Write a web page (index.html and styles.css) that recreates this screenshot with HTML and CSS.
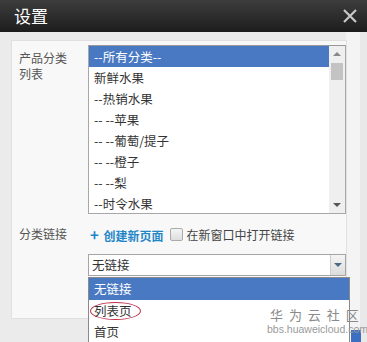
FILE: index.html
```html
<!DOCTYPE html>
<html lang="zh-CN">
<head>
    <meta charset="UTF-8">
    <title>设置</title>
    <link rel="stylesheet" href="styles.css">
</head>
<body>
    <div class="dialog">
        <div class="titlebar">
            <span class="title">设置</span>
            <svg class="close" width="16" height="16" viewBox="0 0 16 16">
                <path d="M2 2 L14 14 M14 2 L2 14" stroke="#c8c8c8" stroke-width="2.2" fill="none"/>
            </svg>
        </div>
        <div class="body">
            <div class="panel">
                <div class="row">
                    <div class="label">产品分类<br>列表</div>
                    <div class="listbox">
                        <ul class="items">
                            <li class="selected">--所有分类--</li>
                            <li>新鲜水果</li>
                            <li>--热销水果</li>
                            <li>-- --苹果</li>
                            <li>-- --葡萄/提子</li>
                            <li>-- --橙子</li>
                            <li>-- --梨</li>
                            <li>--时令水果</li>
                        </ul>
                        <div class="scrollbar">
                            <span class="arrow up"></span>
                            <span class="thumb"></span>
                            <span class="track"></span>
                            <span class="arrow down"></span>
                        </div>
                    </div>
                </div>
                <div class="row link-row">
                    <div class="label">分类链接</div>
                    <div class="link-tools">
                        <a class="create"><span class="plus">+</span> 创建新页面</a>
                        <span class="checkbox"></span>
                        <span class="check-text">在新窗口中打开链接</span>
                    </div>
                </div>
                <div class="row">
                    <div class="label"></div>
                    <div class="select">
                        <div class="select-box">
                            <span class="value">无链接</span>
                            <span class="select-btn"><span class="arrow down"></span></span>
                        </div>
                        <ul class="dropdown">
                            <li class="selected">无链接</li>
                            <li><span class="circled">列表页</span></li>
                            <li>首页</li>
                        </ul>
                    </div>
                </div>
            </div>
        </div>
        <div class="footer-btn"></div>
        <div class="watermark">
            <div class="wm-name">华 为 云 社 区</div>
            <div class="wm-url">bbs.huaweicloud.com</div>
        </div>
    </div>
</body>
</html>
```

FILE: styles.css
```css
body {
    margin: 0;
    font-family: "Noto Sans CJK SC", "Liberation Sans", sans-serif;
    font-size: 12px;
    color: #333;
    background-color: #ebebeb;
    overflow: hidden;
}
.dialog {
    position: relative;
    width: 367px;
    height: 342px;
    overflow: hidden;
}
.titlebar {
    height: 32px;
    display: flex;
    align-items: center;
    justify-content: space-between;
    padding: 0 9px 0 14px;
    background: linear-gradient(#3d3d3d, #1d1d1d);
}
.title {
    color: #fff;
    font-size: 17px;
    line-height: 1;
    margin-top: -2px;
}
.close {
    margin-top: -1px;
}
.body {
    padding: 8px 0 0 11px;
    background: linear-gradient(to right, #ebebeb 346px, #f4f4f4 346px, #f4f4f4 360px, #e9e9e9 360px);
    height: 302px;
}
.panel {
    width: 327px;
    height: 273px;
    padding: 4px 0 0 7px;
    background-color: #f8f8f8;
    border: 1px solid #e0e0e0;
}
.row {
    display: flex;
}
.label {
    width: 69px;
    flex-shrink: 0;
    color: #555;
    line-height: 16px;
    padding-top: 5px;
}
.listbox {
    display: flex;
    width: 256px;
    height: 167px;
    background-color: #fff;
    border: 1px solid #a8a8a8;
    border-top-color: #999;
}
.items {
    flex: 1;
    list-style: none;
    margin: 0;
    padding: 0;
}
.items li {
    height: 21px;
    line-height: 21px;
    padding-left: 5px;
    font-size: 12.5px;
    color: #333;
}
.items li.selected,
.dropdown li.selected {
    background-color: #4a79c3;
    color: #fff;
}
.scrollbar {
    width: 16px;
    display: flex;
    flex-direction: column;
    align-items: center;
    background-color: #efefef;
}
.arrow {
    width: 0;
    height: 0;
    border-left: 4px solid transparent;
    border-right: 4px solid transparent;
}
.arrow.up {
    border-bottom: 4px solid #888;
    margin: 6px 0 7px;
}
.arrow.down {
    border-top: 4px solid #555;
    margin: 5px 0 6px;
}
.thumb {
    width: 12px;
    height: 17px;
    background-color: #c3c3c3;
}
.track {
    flex: 1;
}
.link-row {
    margin-top: 7px;
    height: 33px;
}
.link-row .label {
    padding-top: 5px;
}
.link-tools {
    display: flex;
    align-items: center;
    height: 26px;
}
.create {
    color: #1f86c8;
    font-weight: bold;
    margin-left: 2px;
}
.plus {
    font-size: 15px;
    margin-right: 2px;
}
.checkbox {
    width: 11px;
    height: 11px;
    margin: 0 4px 0 6px;
    border: 1px solid #aaa;
    border-radius: 2px;
    background: linear-gradient(#f4f4f4, #dedede);
}
.check-text {
    color: #444;
}
.select {
    position: relative;
    width: 262px;
}
.select-box {
    display: flex;
    height: 20px;
    background-color: #fff;
    border: 1px solid #a5a5a5;
}
.value {
    flex: 1;
    line-height: 20px;
    padding-left: 3px;
    font-size: 12.5px;
    color: #333;
}
.select-btn {
    width: 14px;
    display: flex;
    justify-content: center;
    align-items: center;
    background: linear-gradient(#f5f5f5, #dcdcdc);
    border-left: 1px solid #ccc;
}
.select-btn .arrow.down {
    border-top-color: #4a6a8a;
    margin: 0;
}
.dropdown {
    position: absolute;
    top: 23px;
    left: 0;
    width: 260px;
    margin: 0;
    padding: 0;
    list-style: none;
    background-color: #fff;
    border: 1px solid #8a8a8a;
}
.dropdown li {
    height: 21px;
    line-height: 21px;
    padding-left: 5px;
    font-size: 12.5px;
    color: #333;
}
.dropdown li.selected {
    height: 22px;
    line-height: 22px;
}
.circled {
    display: inline-block;
    line-height: 16px;
    padding: 0 8px 0 3px;
    margin-left: -4px;
    border: 1px solid #c0304a;
    border-radius: 50%;
}
.footer-btn {
    position: absolute;
    left: 351px;
    top: 330px;
    width: 10px;
    height: 12px;
    background-color: #3d6fc0;
}
.watermark {
    position: absolute;
    z-index: 2;
    left: 267px;
    top: 307px;
    color: #8a8a8a;
    white-space: nowrap;
}
.wm-name {
    font-size: 13px;
    word-spacing: 3px;
    line-height: 16px;
    padding-left: 3px;
}
.wm-url {
    font-family: "Liberation Sans", sans-serif;
    font-size: 10.5px;
    line-height: 13px;
    color: #9a9a9a;
}
```
